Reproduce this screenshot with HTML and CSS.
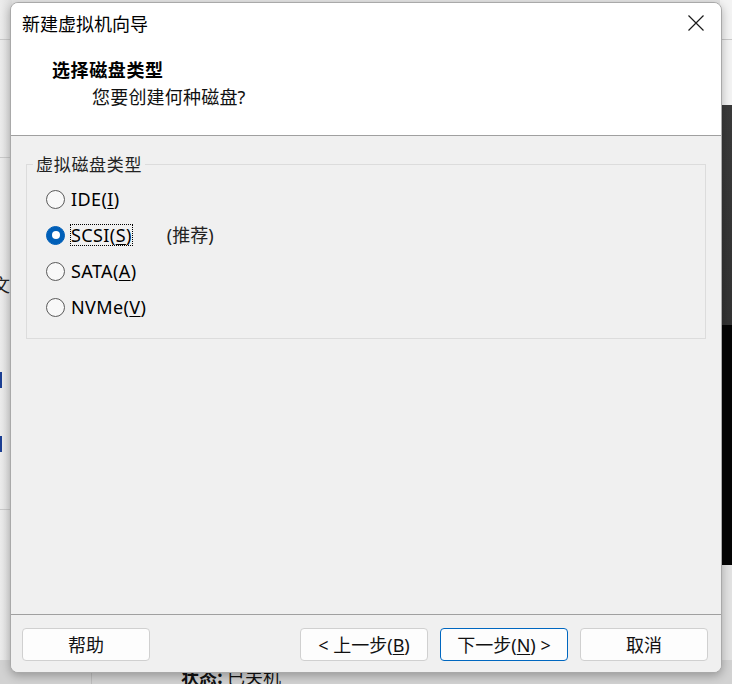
FILE: index.html
```html
<!DOCTYPE html>
<html lang="zh-CN">
<head>
<meta charset="utf-8">
<title>新建虚拟机向导</title>
<link rel="stylesheet" href="styles.css">
</head>
<body>
<div class="desktop">
  <div class="bg-left">
    <span class="bg-line l1"></span>
    <span class="bg-line l2"></span>
    <span class="bg-char">文</span>
    <span class="bg-bar b1"></span>
    <span class="bg-bar b2"></span>
    <span class="bg-line l3"></span>
  </div>
  <div class="bg-right">
    <span class="bg-line r1"></span>
  </div>
  <div class="bg-bottom">
    <span class="bg-vline"></span>
    <span class="bg-status"><b>状态:</b> 已关机</span>
  </div>
</div>

<div class="dialog">
  <div class="header">
    <div class="titlebar">
      <span class="title">新建虚拟机向导</span>
      <svg class="close" width="16" height="16" viewBox="0 0 16 16">
        <path d="M0.5 0.5 L15.5 15.5 M15.5 0.5 L0.5 15.5" stroke="#1a1a1a" stroke-width="1.2" fill="none"/>
      </svg>
    </div>
    <div class="heading">选择磁盘类型</div>
    <div class="subtitle">您要创建何种磁盘?</div>
  </div>

  <div class="body">
    <fieldset class="group">
      <legend>虚拟磁盘类型</legend>
      <div class="row">
        <span class="radio"></span>
        <span class="label">IDE(<u>I</u>)</span>
      </div>
      <div class="row">
        <span class="radio checked"></span>
        <span class="label focus">SCSI(<u>S</u>)</span>
        <span class="rec">(推荐)</span>
      </div>
      <div class="row">
        <span class="radio"></span>
        <span class="label">SATA(<u>A</u>)</span>
      </div>
      <div class="row">
        <span class="radio"></span>
        <span class="label">NVMe(<u>V</u>)</span>
      </div>
    </fieldset>
  </div>

  <div class="footer">
    <button class="btn">帮助</button>
    <button class="btn push">&lt; 上一步(<u>B</u>)</button>
    <button class="btn primary">下一步(<u>N</u>) &gt;</button>
    <button class="btn">取消</button>
  </div>
</div>
</body>
</html>
```
FILE: styles.css
```css
* { box-sizing: border-box; }

html, body {
  margin: 0;
  padding: 0;
}

body {
  width: 732px;
  height: 684px;
  overflow: hidden;
  position: relative;
  background: #e4e4e4;
  font-family: "Noto Sans", "Noto Sans CJK SC", sans-serif;
  color: #000;
}

/* ---------- background application fragments ---------- */
.desktop {
  position: absolute;
  inset: 0;
}

.bg-left {
  position: absolute;
  left: 0;
  top: 0;
  width: 12px;
  height: 684px;
  background: linear-gradient(to right, #ececec, #dedede);
  overflow: hidden;
}

.bg-line {
  position: absolute;
  left: 0;
  width: 12px;
  height: 1px;
  background: #c9c9c9;
}
.l1 { top: 39px; }
.l2 { top: 157px; }
.l3 { top: 509px; }
.r1 { top: 39px; }

.bg-char {
  position: absolute;
  left: -8px;
  top: 272px;
  font-family: "Noto Sans CJK SC", sans-serif;
  font-size: 18px;
  line-height: 24px;
  color: #222;
}

.bg-bar {
  position: absolute;
  left: 0;
  width: 2px;
  height: 16px;
  background: #1c3f94;
}
.b1 { top: 372px; }
.b2 { top: 436px; }

.bg-right {
  position: absolute;
  right: 0;
  top: 0;
  width: 12px;
  height: 684px;
  background: linear-gradient(to bottom,
    #f3f3f3 0, #f3f3f3 105px,
    #3a3a3a 105px, #333 325px,
    #050505 325px, #050505 565px,
    #e2e2e2 565px, #e2e2e2 684px);
}

.bg-bottom {
  position: absolute;
  left: 0;
  bottom: 0;
  width: 732px;
  height: 24px;
  background: #d2d2d2;
}
.bg-vline {
  position: absolute;
  left: 91px;
  top: 0;
  width: 1px;
  height: 24px;
  background: #bdbdbd;
}
.bg-status {
  position: absolute;
  left: 181px;
  top: 4px;
  font-family: "Noto Sans CJK SC", sans-serif;
  font-size: 18px;
  line-height: 24px;
  color: #111;
}

/* ---------- dialog window ---------- */
.dialog {
  position: absolute;
  left: 10px;
  top: 2px;
  width: 712px;
  height: 671px;
  border: 1px solid #a9a9a9;
  border-radius: 8px;
  overflow: hidden;
  display: flex;
  flex-direction: column;
  background: #f0f0f0;
  box-shadow: 0 3px 10px rgba(0, 0, 0, 0.28);
}

.header {
  height: 133px;
  flex: none;
  background: #fff;
  border-bottom: 1px solid #a0a0a0;
}

.titlebar {
  height: 40px;
  display: flex;
  align-items: center;
  justify-content: space-between;
  padding: 0 17px 0 11px;
}

.title {
  font-family: "Noto Sans CJK SC", sans-serif;
  font-size: 18px;
  line-height: 24px;
  color: #000;
}

.close { display: block; }

.heading {
  margin-top: 14px;
  padding-left: 41px;
  font-family: "Noto Sans CJK SC", sans-serif;
  font-weight: 700;
  font-size: 18px;
  line-height: 24px;
  letter-spacing: 0.6px;
}

.subtitle {
  margin-top: 4px;
  padding-left: 81px;
  font-family: "Noto Sans", "Noto Sans CJK SC", sans-serif;
  font-size: 18px;
  line-height: 24px;
  letter-spacing: 0.2px;
  color: #111;
}

.body {
  flex: 1;
  padding: 18px 15px 0 15px;
  background: #f0f0f0;
}

.group {
  margin: 0;
  padding: 7px 0 13px 19px;
  border: 1px solid #dcdcdc;
  min-width: 0;
}

.group legend {
  margin-left: -13px;
  padding: 0 3px 0 3px;
  font-family: "Noto Sans CJK SC", sans-serif;
  font-size: 17px;
  line-height: 20px;
  color: #222;
  letter-spacing: 0.7px;
}

.row {
  height: 36px;
  display: flex;
  align-items: center;
}

.radio {
  width: 19px;
  height: 19px;
  flex: none;
  border: 1px solid #5a5a5a;
  border-radius: 50%;
  background: #f8f8f8;
  display: flex;
  align-items: center;
  justify-content: center;
}

.radio.checked {
  border-color: #005fb8;
  background: #005fb8;
}
.radio.checked::after {
  content: "";
  width: 8px;
  height: 8px;
  border-radius: 50%;
  background: #fff;
}

.label {
  margin-left: 5px;
  border: 1px dotted transparent;
  font-size: 18px;
  line-height: 20px;
  letter-spacing: 0.4px;
  white-space: nowrap;
}

.label.focus { border-color: #000; }

.label u,
.btn u {
  text-underline-offset: 2px;
}

.rec {
  margin-left: 34px;
  font-family: "Noto Sans", "Noto Sans CJK SC", sans-serif;
  font-size: 18px;
  line-height: 20px;
  color: #222;
}

.footer {
  height: 58px;
  flex: none;
  border-top: 1px solid #a0a0a0;
  padding: 13px 13px 0 11px;
  display: flex;
  align-items: flex-start;
  gap: 12px;
  background: #f0f0f0;
}

.btn {
  width: 128px;
  height: 33px;
  margin: 0;
  padding: 0;
  border: 1px solid #d0d0d0;
  border-radius: 4px;
  background: #fdfdfd;
  font-family: "Noto Sans", "Noto Sans CJK SC", sans-serif;
  font-size: 18px;
  line-height: 20px;
  color: #111;
}

.btn.push { margin-left: auto; }

.btn.primary {
  border-color: #0067c0;
}
```
